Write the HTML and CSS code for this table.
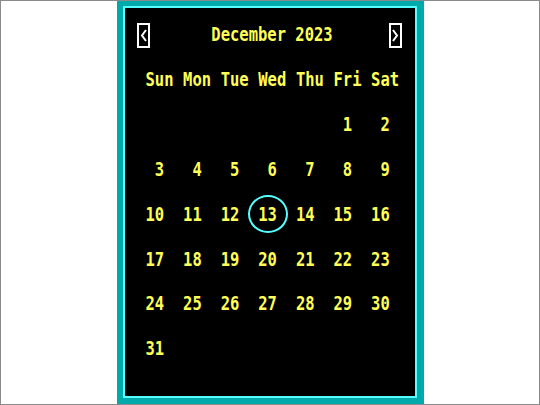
FILE: index.html
```html
<!DOCTYPE html>
<html>
<head>
<meta charset="utf-8">
<link rel="stylesheet" href="styles.css">
</head>
<body>
<div class="page">
  <div class="frame">
    <div class="screen">
      <div class="header">
        <svg class="arrow" width="13" height="25" viewBox="0 0 13 25"><rect x="1" y="1" width="11" height="23" fill="none" stroke="#fff" stroke-width="2"/><polyline points="9,7 5,12.5 9,18" fill="none" stroke="#fff" stroke-width="2"/></svg>
        <div class="title"><span class="t">December 2023</span></div>
        <svg class="arrow" width="13" height="25" viewBox="0 0 13 25"><rect x="1" y="1" width="11" height="23" fill="none" stroke="#fff" stroke-width="2"/><polyline points="4,7 8,12.5 4,18" fill="none" stroke="#fff" stroke-width="2"/></svg>
      </div>
      <div class="grid">
        <div class="cell"><span class="t">Sun</span></div>
        <div class="cell"><span class="t">Mon</span></div>
        <div class="cell"><span class="t">Tue</span></div>
        <div class="cell"><span class="t">Wed</span></div>
        <div class="cell"><span class="t">Thu</span></div>
        <div class="cell"><span class="t">Fri</span></div>
        <div class="cell"><span class="t">Sat</span></div>

        <div class="cell"></div>
        <div class="cell"></div>
        <div class="cell"></div>
        <div class="cell"></div>
        <div class="cell"></div>
        <div class="cell"><span class="t"> 1</span></div>
        <div class="cell"><span class="t"> 2</span></div>

        <div class="cell"><span class="t"> 3</span></div>
        <div class="cell"><span class="t"> 4</span></div>
        <div class="cell"><span class="t"> 5</span></div>
        <div class="cell"><span class="t"> 6</span></div>
        <div class="cell"><span class="t"> 7</span></div>
        <div class="cell"><span class="t"> 8</span></div>
        <div class="cell"><span class="t"> 9</span></div>

        <div class="cell"><span class="t">10</span></div>
        <div class="cell"><span class="t">11</span></div>
        <div class="cell"><span class="t">12</span></div>
        <div class="cell today"><span class="t">13</span></div>
        <div class="cell"><span class="t">14</span></div>
        <div class="cell"><span class="t">15</span></div>
        <div class="cell"><span class="t">16</span></div>

        <div class="cell"><span class="t">17</span></div>
        <div class="cell"><span class="t">18</span></div>
        <div class="cell"><span class="t">19</span></div>
        <div class="cell"><span class="t">20</span></div>
        <div class="cell"><span class="t">21</span></div>
        <div class="cell"><span class="t">22</span></div>
        <div class="cell"><span class="t">23</span></div>

        <div class="cell"><span class="t">24</span></div>
        <div class="cell"><span class="t">25</span></div>
        <div class="cell"><span class="t">26</span></div>
        <div class="cell"><span class="t">27</span></div>
        <div class="cell"><span class="t">28</span></div>
        <div class="cell"><span class="t">29</span></div>
        <div class="cell"><span class="t">30</span></div>

        <div class="cell"><span class="t">31</span></div>
      </div>
    </div>
  </div>
</div>
</body>
</html>
```
FILE: styles.css
```css
html, body {
  margin: 0;
  padding: 0;
  background: #fff;
}
.page {
  width: 540px;
  height: 405px;
  box-sizing: border-box;
  border: 1px solid #8a8a8a;
  display: flex;
  justify-content: center;
  align-items: flex-start;
  overflow: hidden;
}
.frame {
  width: 307px;
  height: 404px;
  margin-top: -1px;
  box-sizing: border-box;
  border: 6px solid #00aaaa;
  border-right-width: 7px;
}
.screen {
  height: 100%;
  box-sizing: border-box;
  border: 2px solid #55ffff;
  background: #000;
  padding: 15px 13px 0 12px;
  font-family: "DejaVu Sans Mono", monospace;
  font-weight: bold;
  font-size: 15.5px;
  color: #ffff55;
}
.header {
  display: flex;
  align-items: center;
  height: 25px;
}
.arrow {
  display: block;
  flex: none;
}
.title {
  flex: 1;
  text-align: center;
  padding-left: 6px;
  line-height: 25px;
}
.t {
  display: inline-block;
  white-space: pre;
  transform: scaleY(1.3);
}
.grid {
  display: grid;
  grid-template-columns: repeat(7, 37.6px);
  grid-auto-rows: 45px;
  margin-top: 8px;
  margin-left: 9px;
}
.cell {
  display: flex;
  align-items: center;
  position: relative;
}
.today::before {
  content: "";
  position: absolute;
  left: -10px;
  top: 4px;
  width: 36px;
  height: 34px;
  border: 2px solid #55ffff;
  border-radius: 50%;
}
```
